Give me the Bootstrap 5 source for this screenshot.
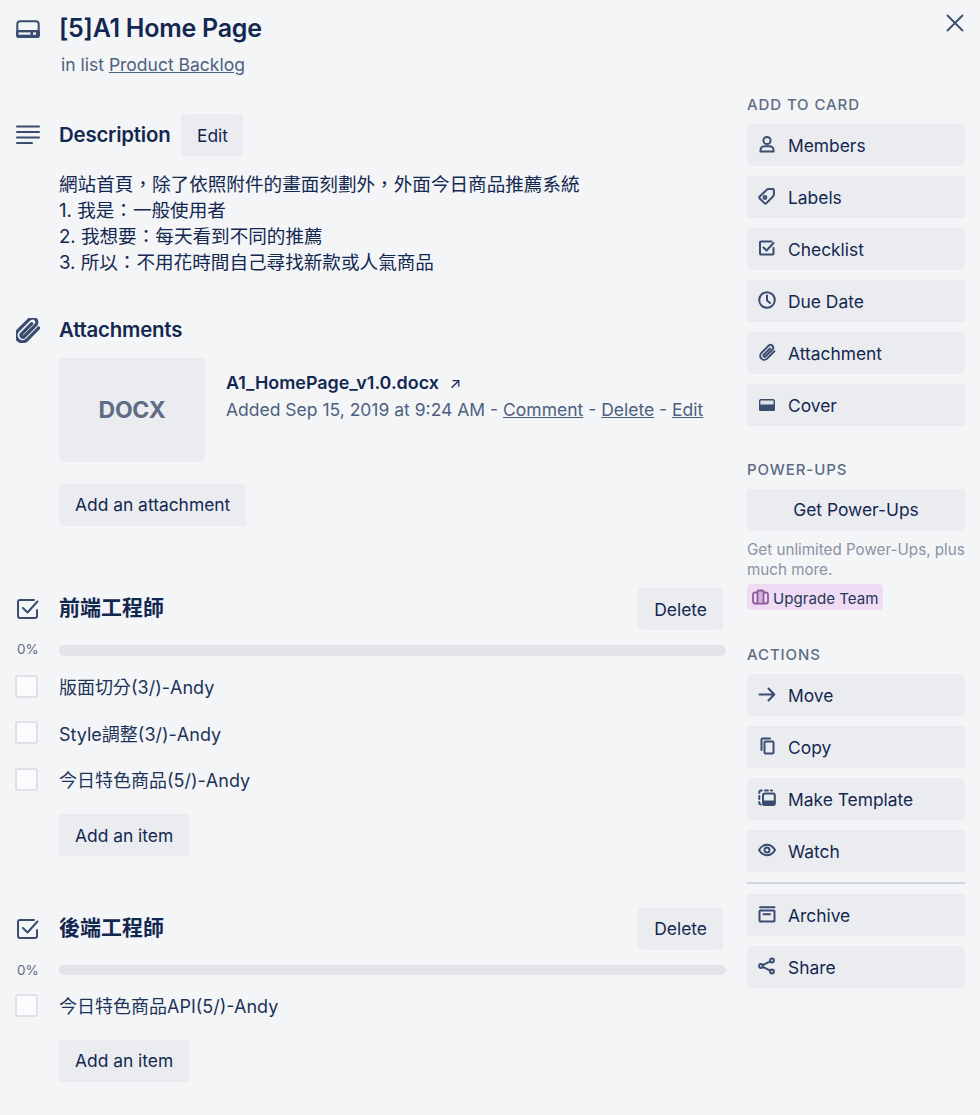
<!DOCTYPE html>
<html lang="zh-Hant">
<head>
<meta charset="utf-8">
<title>[5]A1 Home Page</title>
<link href="https://cdn.jsdelivr.net/npm/bootstrap@5.3.0/dist/css/bootstrap.min.css" rel="stylesheet">
<style>
:root{--ink:#172b4d;--ink2:#132850;--soft:#4d5f7f;--btn:#ebecf0;}
html,body{margin:0;background:#f4f5f7;}
body{font-family:Inter,"Noto Sans CJK TC",sans-serif;color:var(--ink);font-size:17.5px;line-height:26px;width:980px;height:1115px;overflow:hidden;}
.shell{width:980px;height:1115px;padding-left:16px;position:relative;}
.main-col{width:710px;flex:none;}
.side-col{width:218px;flex:none;margin-left:21px;padding-top:92px;}
.gutter{width:43px;flex:none;display:flex;align-items:center;}
.gutter svg{display:block;}
.ico{fill:none;stroke:#3a4d70;stroke-width:2;stroke-linecap:round;stroke-linejoin:round;}
.tile-btn{display:block;background:var(--btn);color:var(--ink2);border:0;border-radius:4px;height:42px;font-size:17.4px;line-height:43px;padding:0 16px;white-space:nowrap;text-decoration:none;}
.tile-btn:hover{background:#e2e4ea;color:var(--ink2);}
.title-row{height:40px;margin-top:8px;}
.card-title-text{font-size:25px;font-weight:600;line-height:40px;color:var(--ink2);letter-spacing:-.25px;margin:0;}
.in-list{margin:4px 0 0 45px;font-size:17.5px;line-height:26px;color:var(--soft);}
.in-list a,.meta a{color:var(--soft);text-decoration:underline;}
.desc-head{margin-top:36px;height:42px;}
.sec-title{font-size:20.4px;font-weight:600;color:var(--ink2);line-height:42px;margin:0;letter-spacing:-.2px;}
.cjk-title{font-size:21px;letter-spacing:0;line-height:40px;margin-bottom:2px;}
.edit-btn{margin-left:11px;padding:0 15.5px;}
.desc-body{margin:15px 0 0 43px;font-size:18.6px;line-height:26px;color:var(--ink2);}
.att-head{margin-top:34px;height:42px;}
.att-row{margin:7px 0 0 43px;}
.thumb{width:146px;height:104px;background:#ebecf0;border-radius:4px;color:#5e6c84;font-size:23px;font-weight:700;display:flex;align-items:center;justify-content:center;letter-spacing:-.3px;}
.att-info{margin-left:21px;padding-top:12px;}
.att-name{font-size:17.9px;font-weight:600;color:var(--ink2);line-height:26px;}
.att-name span{font-weight:400;font-size:15px;margin-left:6px;}
.meta{font-size:17.5px;line-height:26px;color:var(--soft);white-space:nowrap;}
.add-btn{margin:22px 0 0 43px;line-height:42px;}
.del-btn{margin-right:3px;}
.del-two{line-height:42px;}
.check-one{margin-top:62px;height:42px;}
.check-two{margin-top:51.5px;height:42px;}
.prog-row{height:22px;align-items:center;margin-top:9.5px;}
.pct{width:43px;flex:none;font-size:13.5px;color:#5e6c84;line-height:22px;padding-left:1px;}
.pct-up{margin-bottom:3px;}
.bar-track{height:11px;width:667px;flex:none;background:#e2e4ea;border-radius:6px;}
.track-thin{height:10px;}
.item-row{height:46.5px;align-items:center;}
.box{width:23px;height:23px;flex:none;margin:-4px 21px 0 -1px;border:2px solid #dfe1e6;border-radius:3px;background:#fafbfc;}
.item-text{font-size:18px;color:#1d3357;white-space:nowrap;}
.items-one{margin-top:3.5px;}
.items-two{margin-top:3px;}
.add-item{margin:9.5px 0 0 43px;}
.add-item2{margin:9.5px 0 0 43px;line-height:42px;}
.side-label{font-size:15px;font-weight:500;letter-spacing:.9px;line-height:26px;color:#5e6c84;margin:0 0 6px;height:26px;}
.side-stack{display:flex;flex-direction:column;gap:10px;}
.side-btn{display:flex;align-items:center;line-height:42px;padding:2px 0 0 11px;width:218px;}
.side-btn svg{width:18px;height:18px;flex:none;margin-right:12px;margin-top:-4px;}
.center-btn{text-align:center;width:218px;padding:0;line-height:42px;}
.pu-note{font-size:15.2px;line-height:20px;color:#8993a4;margin:9px -4px 0 0;white-space:nowrap;}
.upgrade{display:inline-flex;align-items:center;background:#efdbf3;border-radius:4px;height:26px;font-size:15.1px;color:#253858;padding:3px 5px 0;margin-top:4px;width:136px;white-space:nowrap;}
.upgrade svg{margin:-4px 4px 0 0;flex:none;}
.sep{height:2px;background:#d3d5de;margin:0;}
.close-x{position:absolute;left:946px;top:9px;background:none;border:0;padding:0;width:18px;height:18px;}
.pw-label{margin-top:31px;}
.act-label{margin-top:30px;}
</style>
</head>
<body>
<div class="shell d-flex">
  <button class="close-x" aria-label="Close"><svg width="18" height="18" viewBox="0 0 18 18"><path d="M1.500 1.500l15 15M16.500 1.500l-15 15" fill="none" stroke="#3a4d70" stroke-width="1.800" stroke-linecap="round"/></svg></button>

  <div class="main-col">
    <div class="d-flex title-row">
      <div class="gutter"><svg width="24" height="24" viewBox="0 0 24 24"><rect x="1.300" y="5.300" width="21.400" height="15.400" rx="2.800" class="ico" stroke-width="2.600"/><rect x="0" y="14" width="24" height="8" rx="2.800" fill="#3a4d70"/><rect x="2.500" y="16.400" width="12" height="2.300" fill="#f4f5f7"/><rect x="17" y="16.400" width="3" height="2.300" fill="#f4f5f7"/></svg></div>
      <h1 class="card-title-text">[5]A1 Home Page</h1>
    </div>
    <p class="in-list">in list <a href="#">Product Backlog</a></p>

    <div class="d-flex align-items-center desc-head">
      <div class="gutter"><svg width="24" height="20" viewBox="0 0 24 20"><path d="M1 1.500h22M1 7h22M1 12.500h22M1 18h15" fill="none" stroke="#3a4d70" stroke-width="2" stroke-linecap="round"/></svg></div>
      <h2 class="sec-title">Description</h2>
      <a class="tile-btn edit-btn" href="#">Edit</a>
    </div>
    <div class="desc-body">網站首頁，除了依照附件的畫面刻劃外，外面今日商品推薦系統<br>1. 我是：一般使用者<br>2. 我想要：每天看到不同的推薦<br>3. 所以：不用花時間自己尋找新款或人氣商品</div>

    <div class="d-flex align-items-center att-head">
      <div class="gutter"><svg width="24" height="25" viewBox="2.200 1 15 15.500"><path d="M16.300 7.200L9.100 14.600a4 4 0 0 1-5.700-5.700L10.800 1.500a2.700 2.700 0 0 1 3.800 3.800L7.400 12.500a1.200 1.200 0 0 1-1.700-1.700L12 4.500" class="ico" stroke-width="1.100"/></svg></div>
      <h2 class="sec-title">Attachments</h2>
    </div>
    <div class="d-flex att-row">
      <div class="thumb">DOCX</div>
      <div class="att-info">
        <div class="att-name">A1_HomePage_v1.0.docx <span>↗</span></div>
        <div class="meta">Added Sep 15, 2019 at 9:24 AM - <a href="#">Comment</a> - <a href="#">Delete</a> - <a href="#">Edit</a></div>
      </div>
    </div>
    <a class="tile-btn add-btn d-inline-block" href="#">Add an attachment</a>

    <div class="d-flex align-items-center check-one">
      <div class="gutter"><svg width="24" height="24" viewBox="0 0 24 24"><path d="M21 13v6a2 2 0 0 1-2 2H4a2 2 0 0 1-2-2V5a2 2 0 0 1 2-2h14" class="ico" stroke-width="2.500"/><path d="M7 11l4.500 4.500L21.500 4.500" class="ico" stroke-width="2.500"/></svg></div>
      <h2 class="sec-title cjk-title flex-grow-1">前端工程師</h2>
      <a class="tile-btn del-btn" href="#">Delete</a>
    </div>
    <div class="d-flex prog-row"><div class="pct pct-up">0%</div><div class="bar-track"></div></div>
    <div class="items-one">
      <div class="d-flex item-row"><span class="box"></span><span class="item-text">版面切分(3/)-Andy</span></div>
      <div class="d-flex item-row"><span class="box"></span><span class="item-text">Style調整(3/)-Andy</span></div>
      <div class="d-flex item-row"><span class="box"></span><span class="item-text">今日特色商品(5/)-Andy</span></div>
    </div>
    <a class="tile-btn add-item d-inline-block" href="#">Add an item</a>

    <div class="d-flex align-items-center check-two">
      <div class="gutter"><svg width="24" height="24" viewBox="0 0 24 24"><path d="M21 13v6a2 2 0 0 1-2 2H4a2 2 0 0 1-2-2V5a2 2 0 0 1 2-2h14" class="ico" stroke-width="2.500"/><path d="M7 11l4.500 4.500L21.500 4.500" class="ico" stroke-width="2.500"/></svg></div>
      <h2 class="sec-title cjk-title flex-grow-1">後端工程師</h2>
      <a class="tile-btn del-btn del-two" href="#">Delete</a>
    </div>
    <div class="d-flex prog-row"><div class="pct">0%</div><div class="bar-track track-thin"></div></div>
    <div class="items-two">
      <div class="d-flex item-row"><span class="box"></span><span class="item-text">今日特色商品API(5/)-Andy</span></div>
    </div>
    <a class="tile-btn add-item2 d-inline-block" href="#">Add an item</a>
  </div>

  <aside class="side-col">
    <h3 class="side-label">ADD TO CARD</h3>
    <div class="side-stack">
      <a class="tile-btn side-btn" href="#"><svg viewBox="0 0 18 18"><circle cx="9" cy="5.500" r="3.600" class="ico" stroke-width="1.500"/><path d="M2.500 16.500v-1.500c0-2.300 2-3.800 4-3.800h5c2 0 4 1.500 4 3.800v1.500z" class="ico" stroke-width="1.500"/></svg>Members</a>
      <a class="tile-btn side-btn" href="#"><svg viewBox="0 0 18 18"><path d="M1.500 9.800L8.800 2.800c.5-.5 1-.7 1.700-.7h4.200c.7 0 1.200.5 1.200 1.200v4.200c0 .7-.2 1.200-.7 1.700l-7 7.200c-.4.400-1 .400-1.400 0L1.500 11.200c-.4-.4-.4-1 0-1.400z" class="ico" stroke-width="1.200"/><circle cx="7" cy="10.500" r="1.400" class="ico" stroke-width="1.200"/></svg>Labels</a>
      <a class="tile-btn side-btn" href="#"><svg viewBox="0 0 18 18"><path d="M15.500 9v5.500a1 1 0 0 1-1 1H3a1 1 0 0 1-1-1v-11a1 1 0 0 1 1-1h10.500" class="ico" stroke-width="1.600"/><path d="M5.500 8.500l3 3L15.500 4" class="ico" stroke-width="1.600"/></svg>Checklist</a>
      <a class="tile-btn side-btn" href="#"><svg viewBox="0 0 18 18"><circle cx="9" cy="9" r="7.800" class="ico" stroke-width="1.500"/><path d="M9 4.500V9.500l3 2.500" class="ico" stroke-width="1.500"/></svg>Due Date</a>
      <a class="tile-btn side-btn" href="#"><svg viewBox="0 0 18 18"><path d="M16.300 8.200L9.100 15.600a4 4 0 0 1-5.700-5.700L10.800 2.500a2.700 2.700 0 0 1 3.800 3.800L7.400 13.500a1.200 1.200 0 0 1-1.700-1.700L12 5.500" class="ico" stroke-width="1.100"/></svg>Attachment</a>
      <a class="tile-btn side-btn" href="#"><svg viewBox="0 0 18 18"><rect x="1.700" y="4.700" width="14.600" height="10.600" rx="1.300" fill="#dfe1e6" stroke="#3a4d70" stroke-width="1.400"/><rect x="1" y="9.500" width="16" height="6.500" rx="1.300" fill="#3a4d70"/></svg>Cover</a>
    </div>

    <h3 class="side-label pw-label">POWER-UPS</h3>
    <a class="tile-btn center-btn" href="#">Get Power-Ups</a>
    <p class="pu-note">Get unlimited Power-Ups, plus<br>much more.</p>
    <a class="upgrade text-decoration-none" href="#"><svg width="17" height="16" viewBox="0 0 17 16"><rect x="1" y="3.500" width="15" height="11" rx="2" fill="none" stroke="#8f5b9c" stroke-width="1.800"/><path d="M5.500 14V2.500a1 1 0 0 1 1-1h4a1 1 0 0 1 1 1V14" fill="#d5b3dc" stroke="#8f5b9c" stroke-width="1.800"/></svg>Upgrade Team</a>

    <h3 class="side-label act-label">ACTIONS</h3>
    <div class="side-stack">
      <a class="tile-btn side-btn" href="#"><svg viewBox="0 0 18 18"><path d="M1.500 9.500h14.500M10.500 3.500l5.800 6-5.800 6" class="ico" stroke-width="1.400"/></svg>Move</a>
      <a class="tile-btn side-btn" href="#"><svg viewBox="0 0 18 18"><path d="M3.500 13V2.500a1 1 0 0 1 1-1H12" class="ico" stroke-width="1.600"/><rect x="6.500" y="4.500" width="9" height="12" rx="1" class="ico" stroke-width="1.600"/></svg>Copy</a>
      <a class="tile-btn side-btn" href="#"><svg viewBox="0 0 18 18"><path d="M1.300 4V3a1.500 1.500 0 0 1 1.500-1.500h1M7 1.500h3M13 1.500h1M1.300 7v3M1.300 13v1a1.500 1.500 0 0 0 1.500 1.500" class="ico" stroke-width="1.400"/><rect x="5" y="4.500" width="11.800" height="11.500" rx="2" class="ico" stroke-width="1.500"/><rect x="4.300" y="11.500" width="13" height="5" rx="1.500" fill="#3a4d70"/></svg>Make Template</a>
      <a class="tile-btn side-btn" href="#"><svg viewBox="0 0 18 18"><path d="M1 9c2-3.500 4.700-5.300 8-5.300S15 5.500 17 9c-2 3.500-4.700 5.300-8 5.300S3 12.500 1 9z" class="ico" stroke-width="1.500"/><circle cx="9" cy="9" r="2.500" class="ico" stroke-width="1.500"/></svg>Watch</a>
      <div class="sep"></div>
      <a class="tile-btn side-btn" href="#"><svg viewBox="0 0 18 18"><path d="M2 2.300h14.500" class="ico" stroke-width="1.400"/><rect x="1.500" y="5.500" width="15" height="11" rx=".8" class="ico" stroke-width="1.500"/><path d="M5.500 9.300h6.500" class="ico" stroke-width="1.400"/></svg>Archive</a>
      <a class="tile-btn side-btn" href="#"><svg viewBox="0 0 18 18"><circle cx="14" cy="3.500" r="1.900" class="ico" stroke-width="1.400"/><circle cx="14" cy="14.500" r="1.900" class="ico" stroke-width="1.400"/><circle cx="3" cy="9" r="1.900" class="ico" stroke-width="1.400"/><path d="M4.700 8.100l7.600-3.800M4.700 9.900l7.600 3.800" class="ico" stroke-width="1.400"/></svg>Share</a>
    </div>
  </aside>
</div>
</body>
</html>
